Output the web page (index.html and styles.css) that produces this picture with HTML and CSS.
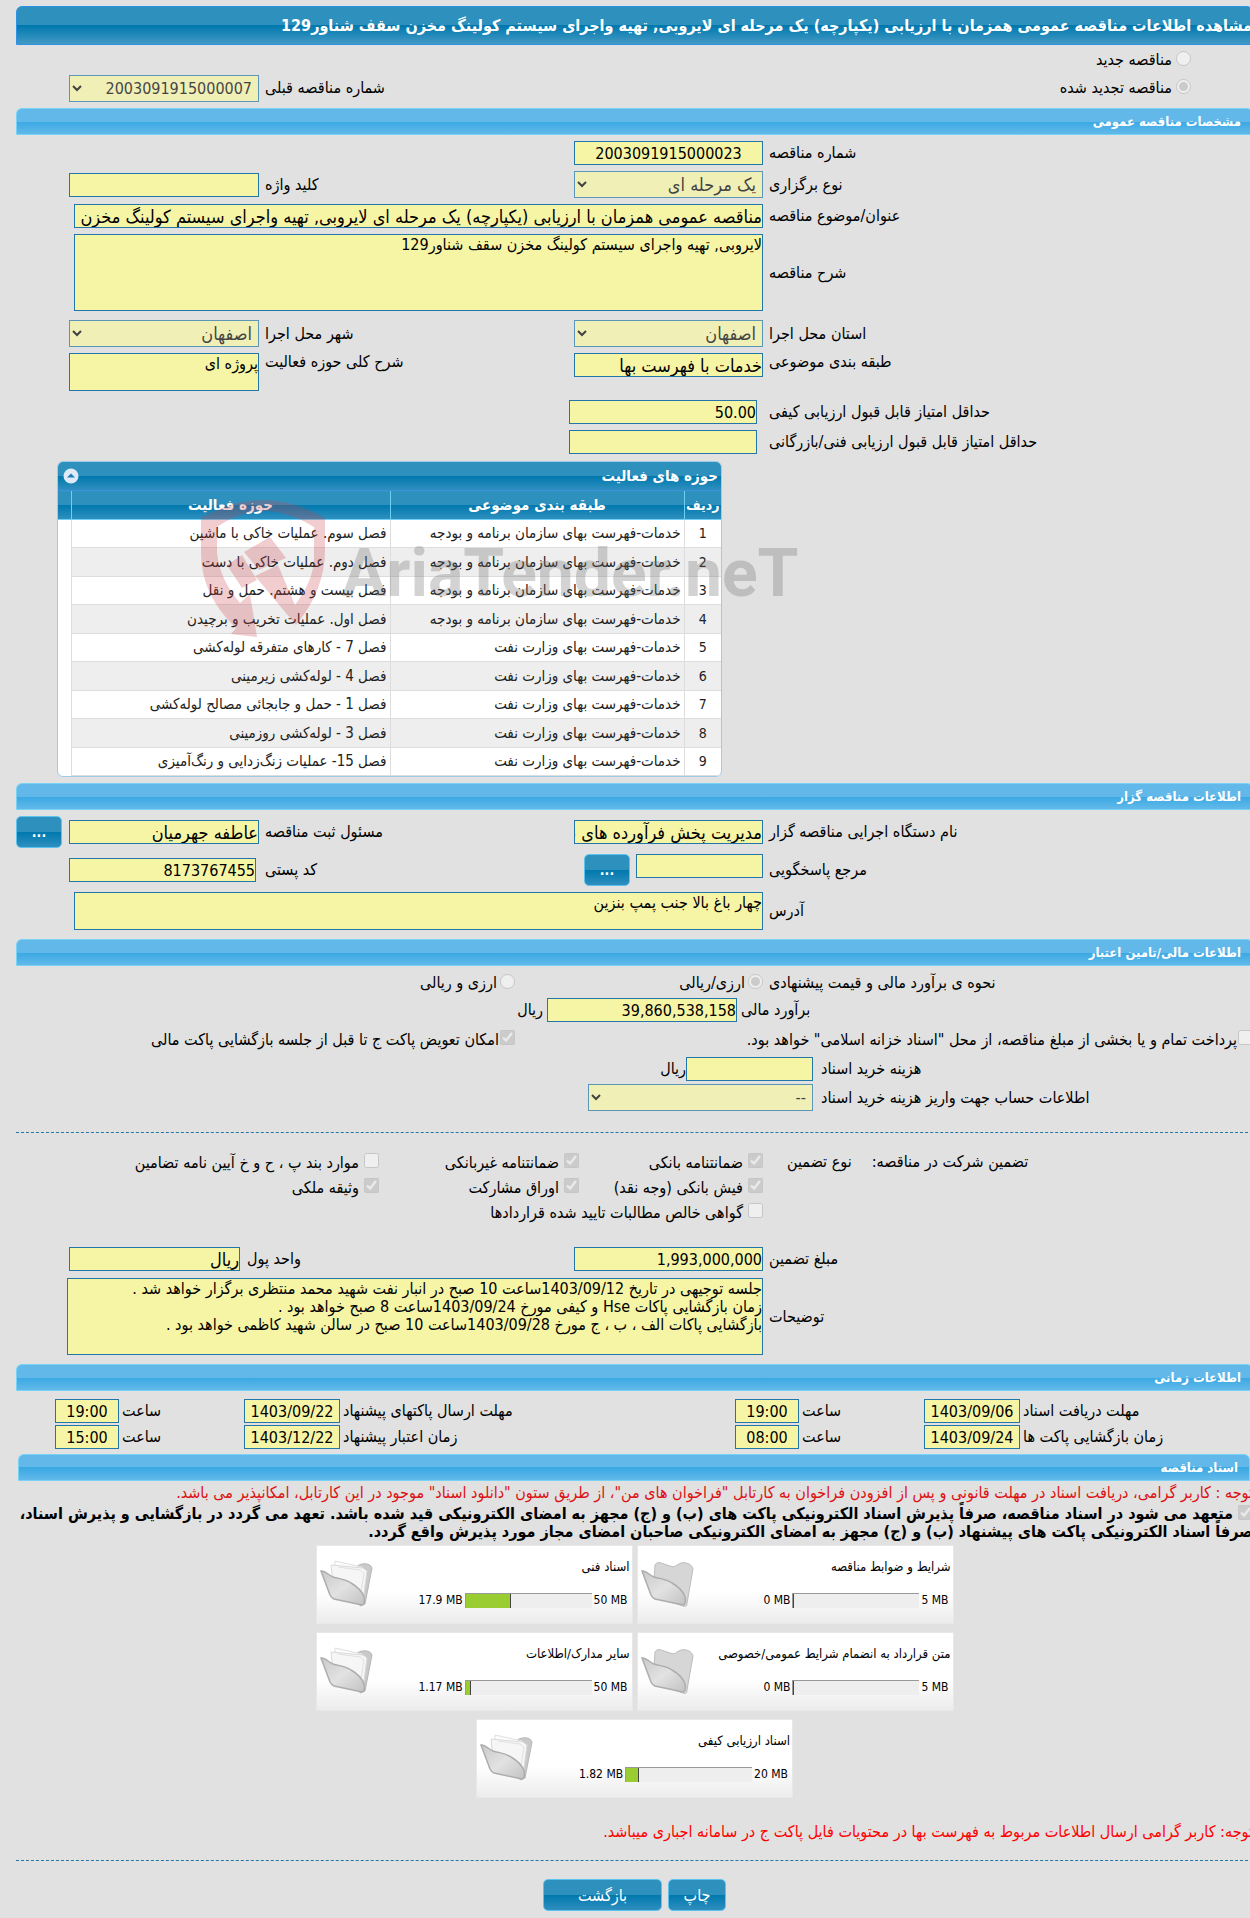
FILE: index.html
```html
<!DOCTYPE html>
<html lang="fa" dir="rtl">
<head>
  <meta charset="UTF-8">
  <meta name="viewport" content="width=device-width, initial-scale=1.0">
  <title>مشاهده اطلاعات مناقصه عمومی</title>
  <link rel="stylesheet" href="styles.css">
</head>
<body>

<!-- folder icons -->
<svg class="defs" width="0" height="0" aria-hidden="true">
  <defs>
    <linearGradient id="front" x1="0" y1="0" x2="1" y2="1">
      <stop offset="0" stop-color="#c9c9c9"/>
      <stop offset="0.5" stop-color="#e2e2e2"/>
      <stop offset="1" stop-color="#c2c2c2"/>
    </linearGradient>
    <symbol id="folder-empty" viewBox="0 0 54 50">
      <path d="M14 5c1-2 3-3 6-2l9 3c3 1 5 1 7-1l4-2c5-1 11 1 12 6l-6 34c0 3-1 4-4 3L12 36z" fill="#d6d6d6" stroke="#bdbdbd"/>
      <path d="M1 11c4-1 7 4 12 6 7 2 12 2 18 6 7 4 11 8 13 14 1 4 0 8-2 8L14 39c-2-1-3-2-4-4z" fill="url(#front)" stroke="#adadad" stroke-width="1.500"/>
    </symbol>
    <symbol id="folder-full" viewBox="0 0 54 50">
      <path d="M36 7c4-4 14-5 16 1l-7 36-5 2z" fill="#c9c9c9" stroke="#b8b8b8"/>
      <path d="M15 1l27 6-3 32-25-8z" fill="#fcfcfc" stroke="#e0e0e0"/>
      <path d="M11 5l32 3 4 3-4 30-29-8z" fill="#f6f6f6" stroke="#dadada"/>
      <path d="M18 7l22 3 4 3-4 25" fill="none" stroke="#e0e0e0"/>
      <path d="M1 11c4-1 7 4 12 6 7 2 12 2 18 6 7 4 11 8 13 14 1 4 0 8-2 8L14 39c-2-1-3-2-4-4z" fill="url(#front)" stroke="#adadad" stroke-width="1.500"/>
    </symbol>
  </defs>
</svg>

<main class="page">
  <h1 class="page-title">مشاهده اطلاعات مناقصه عمومی همزمان با ارزیابی (یکپارچه) یک مرحله ای لایروبی, تهیه واجرای سیستم کولینگ مخزن سقف شناور129</h1>

  <div class="kind">
    <label><input type="radio" name="kind" disabled>مناقصه جدید</label>
    <div class="kind-row">
      <label><input type="radio" name="kind" checked disabled>مناقصه تجدید شده</label>
      <label class="lbl" for="prev">شماره مناقصه قبلی</label>
      <select id="prev" disabled><option>2003091915000007</option></select>
    </div>
  </div>

  <!-- مشخصات -->
  <h2 class="bar">مشخصات مناقصه عمومی</h2>
  <div class="fields">
    <div class="row">
      <label class="lbl" for="no">شماره مناقصه</label>
      <input class="center" id="no" type="text" value="2003091915000023" readonly>
    </div>
    <div class="row">
      <label class="lbl" for="type">نوع برگزاری</label>
      <select class="fa" id="type" disabled><option>یک مرحله ای</option></select>
      <label class="lbl" for="key">کلید واژه</label>
      <input id="key" type="text" readonly>
    </div>
    <div class="row">
      <label class="lbl" for="subject">عنوان/موضوع مناقصه</label>
      <input class="wide fa" id="subject" type="text" value="مناقصه عمومی همزمان با ارزیابی (یکپارچه) یک مرحله ای لایروبی, تهیه واجرای سیستم کولینگ مخزن سقف شناور129" readonly>
    </div>
    <div class="row">
      <label class="lbl" for="desc">شرح مناقصه</label>
      <textarea class="wide tall" id="desc" readonly>لایروبی, تهیه واجرای سیستم کولینگ مخزن سقف شناور129</textarea>
    </div>
    <div class="row spaced">
      <label class="lbl" for="state">استان محل اجرا</label>
      <select class="fa" id="state" disabled><option>اصفهان</option></select>
      <label class="lbl" for="city">شهر محل اجرا</label>
      <select class="fa" id="city" disabled><option>اصفهان</option></select>
    </div>
    <div class="row top">
      <label class="lbl" for="class">طبقه بندی موضوعی</label>
      <input class="fa" id="class" type="text" value="خدمات با فهرست بها" readonly>
      <label class="lbl" for="scope">شرح کلی حوزه فعالیت</label>
      <textarea id="scope" readonly>پروژه ای</textarea>
    </div>
    <div class="row score spaced">
      <label class="lbl" for="q1">حداقل امتیاز قابل قبول ارزیابی کیفی</label>
      <input id="q1" type="text" value="50.00" readonly>
    </div>
    <div class="row score">
      <label class="lbl" for="q2">حداقل امتیاز قابل قبول ارزیابی فنی/بازرگانی</label>
      <input id="q2" type="text" readonly>
    </div>
  </div>

  <div class="panel">
    <div class="panel-title">
      <span>حوزه های فعالیت</span>
      <button class="collapse" aria-label="بستن"><svg viewBox="0 0 16 16" width="16" height="16"><circle cx="8" cy="8" r="7.500" fill="#dfe9f7"/><path d="M4 9.500L8 5.500l4 4z" fill="#1b7fb5"/></svg></button>
    </div>
    <table>
      <thead>
        <tr><th class="c-no">ردیف</th><th class="c-topic">طبقه بندی موضوعی</th><th>حوزه فعالیت</th><th class="c-end"></th></tr>
      </thead>
      <tbody>
        <tr><td>1</td><td>خدمات-فهرست بهای سازمان برنامه و بودجه</td><td>فصل سوم. عملیات خاکی با ماشین</td><td></td></tr>
        <tr><td>2</td><td>خدمات-فهرست بهای سازمان برنامه و بودجه</td><td>فصل دوم. عملیات خاکی با دست</td><td></td></tr>
        <tr><td>3</td><td>خدمات-فهرست بهای سازمان برنامه و بودجه</td><td>فصل بیست و هشتم. حمل و نقل</td><td></td></tr>
        <tr><td>4</td><td>خدمات-فهرست بهای سازمان برنامه و بودجه</td><td>فصل اول. عملیات تخریب و برچیدن</td><td></td></tr>
        <tr><td>5</td><td>خدمات-فهرست بهای وزارت نفت</td><td>فصل 7 - کارهای متفرقه لوله‌کشی</td><td></td></tr>
        <tr><td>6</td><td>خدمات-فهرست بهای وزارت نفت</td><td>فصل 4 - لوله‌کشی زیرمینی</td><td></td></tr>
        <tr><td>7</td><td>خدمات-فهرست بهای وزارت نفت</td><td>فصل 1 - حمل و جابجائی مصالح لوله‌کشی</td><td></td></tr>
        <tr><td>8</td><td>خدمات-فهرست بهای وزارت نفت</td><td>فصل 3 - لوله‌کشی روزمینی</td><td></td></tr>
        <tr><td>9</td><td>خدمات-فهرست بهای وزارت نفت</td><td>فصل 15- عملیات زنگ‌زدایی و رنگ‌آمیزی</td><td></td></tr>
      </tbody>
    </table>
    <div class="watermark">
      <svg viewBox="0 0 126 138" width="126" height="138">
        <path fill-rule="evenodd" d="M1 18Q62-18 125 18V50Q125 90 96 125L55 76L78 65L95 105Q114 80 114 57V27Q62-5 17 27V53Q20 80 40 103L50 94L57 137L31 134L36 128Q1 95 1 53Z"/>
        <path d="M27 65L42 55L57 80L42 88ZM44 52L70 37L86 58L59 70Z"/>
      </svg>
      <span>AriaTender.neT</span>
    </div>
  </div>

  <!-- مناقصه گزار -->
  <h2 class="bar">اطلاعات مناقصه گزار</h2>
  <div class="fields">
    <div class="row">
      <label class="lbl" for="org">نام دستگاه اجرایی مناقصه گزار</label>
      <input class="fa" id="org" type="text" value="مدیریت پخش فرآورده های نفتی" readonly>
      <label class="lbl" for="resp">مسئول ثبت مناقصه</label>
      <input class="fa" id="resp" type="text" value="عاطفه جهرمیان" readonly>
      <button class="btn dots end">...</button>
    </div>
    <div class="row">
      <label class="lbl" for="ref">مرجع پاسخگویی</label>
      <div class="pair">
        <input id="ref" type="text" readonly>
        <button class="btn dots">...</button>
      </div>
      <label class="lbl" for="zip">کد پستی</label>
      <input class="zip" id="zip" type="text" value="8173767455" readonly>
    </div>
    <div class="row">
      <label class="lbl" for="addr">آدرس</label>
      <textarea class="wide" id="addr" readonly>چهار باغ بالا جنب پمپ بنزین</textarea>
    </div>
  </div>

  <!-- مالی -->
  <h2 class="bar spaced-bar">اطلاعات مالی/تامین اعتبار</h2>
  <div class="money">
    <div class="row options">
      <span class="lbl">نحوه ی برآورد مالی و قیمت پیشنهادی</span>
      <div class="radios">
        <label><input type="radio" name="cur" checked disabled>ارزی/ریالی</label>
        <label><input type="radio" name="cur" disabled>ارزی و ریالی</label>
      </div>
    </div>
    <div class="estimate">
      <label class="lbl near" for="est">برآورد مالی</label>
      <input id="est" type="text" value="39,860,538,158" readonly>
      <span>ریال</span>
    </div>
    <div class="treasury">
      <label><input type="checkbox" disabled>پرداخت تمام و یا بخشی از مبلغ مناقصه، از محل "اسناد خزانه اسلامی" خواهد بود.</label>
      <label><input type="checkbox" checked disabled>امکان تعویض پاکت ج تا قبل از جلسه بازگشایی پاکت مالی</label>
    </div>
    <div class="fee">
      <label class="lbl" for="fee">هزینه خرید اسناد</label>
      <div class="fee-box"><input id="fee" type="text" readonly><span>ریال</span></div>
    </div>
    <div class="fee account">
      <label class="lbl" for="acc">اطلاعات حساب جهت واریز هزینه خرید اسناد</label>
      <select id="acc" disabled><option>--</option></select>
    </div>
  </div>

  <div class="guarantee">
    <div class="g-label"><span>تضمین شرکت در مناقصه:</span><span>نوع تضمین</span></div>
    <div class="checks">
      <label><input type="checkbox" checked disabled>ضمانتنامه بانکی</label>
      <label><input type="checkbox" checked disabled>ضمانتنامه غیربانکی</label>
      <label><input type="checkbox" disabled>موارد بند پ ، ح و خ آیین نامه تضامین</label>
      <label><input type="checkbox" checked disabled>فیش بانکی (وجه نقد)</label>
      <label><input type="checkbox" checked disabled>اوراق مشارکت</label>
      <label><input type="checkbox" checked disabled>وثیقه ملکی</label>
      <label class="span3"><input type="checkbox" disabled>گواهی خالص مطالبات تایید شده قراردادها</label>
    </div>
  </div>

  <div class="fields notes">
    <div class="row">
      <label class="lbl" for="amount">مبلغ تضمین</label>
      <input id="amount" type="text" value="1,993,000,000" readonly>
      <label class="lbl unit-lbl" for="unit">واحد پول</label>
      <input class="unit fa" id="unit" type="text" value="ریال" readonly>
    </div>
    <div class="row">
      <label class="lbl" for="note">توضیحات</label>
      <textarea class="wide tall full" id="note" readonly>جلسه توجیهی در تاریخ 1403/09/12ساعت 10 صبح در انبار نفت شهید محمد منتظری برگزار خواهد شد .
زمان بازگشایی پاکات Hse و کیفی مورخ 1403/09/24ساعت 8 صبح خواهد بود .
بازگشایی پاکات الف ، ب ، ج مورخ 1403/09/28ساعت 10 صبح در سالن شهید کاظمی خواهد بود .</textarea>
    </div>
  </div>

  <!-- زمانی -->
  <h2 class="bar spaced-bar">اطلاعات زمانی</h2>
  <div class="times">
    <label class="lbl near" for="d1">مهلت دریافت اسناد</label>
    <input class="center" id="d1" type="text" value="1403/09/06" readonly>
    <label class="lbl near" for="t1">ساعت</label>
    <input class="center" id="t1" type="text" value="19:00" readonly>
    <label class="lbl near" for="d2">مهلت ارسال پاکتهای پیشنهاد</label>
    <input class="center" id="d2" type="text" value="1403/09/22" readonly>
    <label class="lbl near" for="t2">ساعت</label>
    <input class="center" id="t2" type="text" value="19:00" readonly>
    <label class="lbl near" for="d3">زمان بازگشایی پاکت ها</label>
    <input class="center" id="d3" type="text" value="1403/09/24" readonly>
    <label class="lbl near" for="t3">ساعت</label>
    <input class="center" id="t3" type="text" value="08:00" readonly>
    <label class="lbl near" for="d4">زمان اعتبار پیشنهاد</label>
    <input class="center" id="d4" type="text" value="1403/12/22" readonly>
    <label class="lbl near" for="t4">ساعت</label>
    <input class="center" id="t4" type="text" value="15:00" readonly>
  </div>

  <!-- اسناد -->
  <h2 class="bar docs-bar">اسناد مناقصه</h2>
  <p class="warn">توجه : کاربر گرامی، دریافت اسناد در مهلت قانونی و پس از افزودن فراخوان به کارتابل "فراخوان های من"، از طریق ستون "دانلود اسناد" موجود در این کارتابل، امکانپذیر می باشد.</p>
  <label class="commit"><input type="checkbox" checked disabled> متعهد می شود در اسناد مناقصه، صرفاً پذیرش اسناد الکترونیکی پاکت های (ب) و (ج) مجهز به امضای الکترونیکی قید شده باشد. تعهد می گردد در بازگشایی و پذیرش اسناد،<br>صرفاً اسناد الکترونیکی پاکت های پیشنهاد (ب) و (ج) مجهز به امضای الکترونیکی صاحبان امضای مجاز مورد پذیرش واقع گردد.</label>

  <div class="cards">
    <div class="card">
      <div class="card-body">
        <p>شرایط و ضوابط مناقصه</p>
        <div class="usage"><span>5 MB</span><div class="meter"><div class="fill" style="width: 0%"></div></div><span>0 MB</span></div>
      </div>
      <svg class="folder"><use href="#folder-empty"/></svg>
    </div>
    <div class="card">
      <div class="card-body">
        <p>اسناد فنی</p>
        <div class="usage"><span>50 MB</span><div class="meter"><div class="fill" style="width: 36%"></div></div><span>17.9 MB</span></div>
      </div>
      <svg class="folder"><use href="#folder-full"/></svg>
    </div>
    <div class="card">
      <div class="card-body">
        <p>متن قرارداد به انضمام شرایط عمومی/خصوصی</p>
        <div class="usage"><span>5 MB</span><div class="meter"><div class="fill" style="width: 0%"></div></div><span>0 MB</span></div>
      </div>
      <svg class="folder"><use href="#folder-empty"/></svg>
    </div>
    <div class="card">
      <div class="card-body">
        <p>سایر مدارک/اطلاعات</p>
        <div class="usage"><span>50 MB</span><div class="meter"><div class="fill" style="width: 4%"></div></div><span>1.17 MB</span></div>
      </div>
      <svg class="folder"><use href="#folder-full"/></svg>
    </div>
    <div class="card">
      <div class="card-body">
        <p>اسناد ارزیابی کیفی</p>
        <div class="usage"><span>20 MB</span><div class="meter"><div class="fill" style="width: 10%"></div></div><span>1.82 MB</span></div>
      </div>
      <svg class="folder"><use href="#folder-full"/></svg>
    </div>
  </div>

  <p class="warn red">توجه: کاربر گرامی ارسال اطلاعات مربوط به فهرست بها در محتویات فایل پاکت ج در سامانه اجباری میباشد.</p>

  <div class="actions">
    <button class="btn">چاپ</button>
    <button class="btn back">بازگشت</button>
  </div>
</main>

</body>
</html>
```
FILE: styles.css
```css
* {
  box-sizing: border-box;
}
html {
  overflow-x: hidden;
  background: #e1e1e1;
}
body {
  margin: 0;
  overflow-x: hidden;
  background: #e1e1e1;
  font-family: "DejaVu Sans Condensed", Tahoma, sans-serif;
  font-size: 16px;
  line-height: 18px;
  color: #000;
}
.defs {
  position: absolute;
}
/* the form is slightly wider than the frame it sits in */
.page {
  margin-right: -3px;
  padding: 6px 0 7px 16px;
}
.page-title {
  margin: 0;
  height: 39px;
  line-height: 37px;
  font-size: 16px;
  white-space: nowrap;
  color: #fff;
  border: 1px solid #2d92e6;
  border-radius: 6px 6px 0 0;
  background: linear-gradient(#2e90bd 50%, #0078ae 50%, #4399c4);
}
.bar {
  margin: 0;
  height: 27px;
  line-height: 25px;
  padding: 0 11px;
  font-size: 13px;
  color: #fff;
  border: 1px solid #78d2f5;
  border-radius: 6px 6px 0 0;
  background: linear-gradient(#62b9e9 50%, #39a8e3 50%, #62b9e9);
}
.spaced-bar {
  margin-top: 9px;
}
.docs-bar {
  margin: 5px 3px 0 2px;
}

/* controls */
input, select, textarea, button {
  font-family: inherit;
  margin: 0;
}
input[type="text"], select, textarea {
  width: 100%;
  border: 1px solid #2277a8;
  background: #f6f5a5;
  font-size: 16px;
  color: #000;
  border-radius: 0;
}
input[type="text"] {
  height: 24px;
  padding: 0;
}
select {
  height: 27px;
  padding: 0 2px 0 6px;
}
input.fa, select.fa {
  font-size: 18px;
}
textarea {
  display: block;
  height: 38px;
  padding: 1px 0;
  line-height: 18px;
  resize: none;
  overflow: hidden;
}
input[type="radio"], input[type="checkbox"] {
  width: 15px;
  height: 15px;
  flex: none;
  margin-bottom: 4px;
}
.center {
  text-align: center;
}
.lbl {
  text-align: left;
  padding-left: 6px;
  white-space: nowrap;
}
.near {
  padding-left: 3px;
}
.btn {
  height: 32px;
  width: 58px;
  padding: 0;
  font-size: 16px;
  color: #fff;
  border: 1px solid #5cc3ee;
  border-radius: 5px;
  background: linear-gradient(#2e90bd 50%, #0078ae 50%, #2f8fbe);
}
.dots {
  width: 46px;
  font-weight: bold;
  font-size: 14px;
}
.back {
  width: 119px;
}

/* first rows */
.kind {
  padding: 1px 62px 6px 53px;
}
.kind label {
  display: flex;
  align-items: center;
  gap: 4px;
  height: 28px;
}
.kind-row {
  display: grid;
  grid-template-columns: 1fr auto 190px;
  align-items: center;
}

.fields {
  display: grid;
  gap: 6px;
  padding: 6px 0 0;
}
.row {
  display: grid;
  grid-template-columns: 1fr 189px 315px 190px 53px;
  align-items: center;
}
.top {
  align-items: start;
}
.spaced {
  margin-top: 3px;
}
.score {
  grid-template-columns: 1fr 188px 553px;
}
.score .lbl {
  padding-left: 12px;
}
.wide {
  grid-column: 2 / 5;
  width: auto;
  margin-left: 5px;
}
input.wide {
  width: calc(100% - 5px);
}
textarea.wide {
  width: auto;
}
.full {
  margin-left: -2px;
}
.tall {
  height: 77px;
}
.end {
  justify-self: end;
}
.pair {
  display: flex;
  gap: 6px;
}
.pair input[type="text"] {
  width: 127px;
}
.pair .btn {
  flex: none;
}
input.zip {
  justify-self: end;
  width: 187px;
}

/* activity table */
.panel {
  position: relative;
  width: 665px;
  margin: 7px auto 6px 41px;
  border: 1px solid #9fcbe6;
  border-radius: 6px;
  background: #fff;
}
.panel-title {
  display: flex;
  justify-content: space-between;
  align-items: center;
  height: 29px;
  padding: 0 3px 0 5px;
  font-size: 15px;
  font-weight: bold;
  color: #fff;
  border-bottom: 1px solid #3d94dc;
  border-radius: 5px 5px 0 0;
  background: linear-gradient(#2e90bd 50%, #0078ae 50%, #2f8fbe);
}
.collapse {
  padding: 0;
  border: 0;
  background: none;
  line-height: 0;
}
table {
  width: 100%;
  height: 285px;
  table-layout: fixed;
  border-collapse: collapse;
}
th {
  height: 28px;
  padding: 0;
  font-size: 15px;
  color: #fff;
  border-left: 1px solid #6cd0f5;
  border-bottom: 1px solid #6cd0f5;
  background: linear-gradient(#2e90bd 50%, #0078ae 50%, #2f8fbe);
}
td {
  padding: 0 3px;
  font-size: 15px;
  color: #222;
  border-left: 1px solid #ddd;
  border-bottom: 1px solid #ddd;
}
td:first-child {
  text-align: center;
  font-size: 14px;
}
th.c-no {
  font-size: 14px;
}
td:last-child {
  border-bottom: 0;
}
th:last-child, td:last-child {
  border-left: 0;
}
tr:nth-child(even) td {
  background: #eee;
}
tr:nth-child(even) td:last-child {
  background: #fff;
}
.c-no {
  width: 37px;
}
.c-topic {
  width: 294px;
}
.c-end {
  width: 13px;
}
.watermark {
  position: absolute;
  top: 38px;
  left: 142px;
  display: flex;
  direction: ltr;
  align-items: flex-start;
  gap: 16px;
  pointer-events: none;
}
.watermark svg {
  flex: none;
  fill: rgba(205, 60, 70, 0.26);
}
.watermark span {
  padding-top: 32px;
  font-family: Roboto, "Liberation Sans", sans-serif;
  font-size: 66px;
  line-height: 84px;
  font-weight: bold;
  color: rgba(110, 110, 110, 0.3);
}

/* money */
.money {
  padding: 2px 0 21px;
  border-bottom: 1px dashed #2277a8;
}
.radios {
  grid-column: 2 / 5;
  display: grid;
  grid-template-columns: 248px 1fr;
}
.options {
  height: 30px;
}
.radios label, .treasury label, .checks label {
  display: flex;
  align-items: center;
  gap: 3px;
}
.estimate {
  display: grid;
  grid-template-columns: 1fr 190px 531px;
  align-items: center;
}
.estimate .lbl {
  padding-left: 4px;
}
.estimate span {
  padding-right: 4px;
}
.treasury {
  display: flex;
  justify-content: space-between;
  height: 35px;
}
.treasury label {
  gap: 1px;
  white-space: nowrap;
}
.treasury label:last-child {
  width: 499px;
}
.fee {
  display: grid;
  grid-template-columns: 1fr 225px 572px;
  align-items: center;
}
.fee .lbl {
  padding-left: 8px;
}
.account {
  margin-top: 3px;
}
.fee-box {
  display: flex;
  align-items: center;
}
.fee-box input[type="text"] {
  width: 127px;
}

.guarantee {
  display: grid;
  grid-template-columns: 1fr 747px;
  padding-top: 17px;
}
.g-label {
  display: flex;
  justify-content: flex-end;
  gap: 20px;
  padding: 3px 0 0 24px;
}
.checks {
  display: grid;
  grid-template-columns: 184px 200px 1fr;
  grid-auto-rows: 25px;
}
.checks label {
  gap: 5px;
}
.span3 {
  grid-column: 1 / 4;
}
.notes {
  gap: 7px;
  padding-top: 22px;
}
input.unit {
  justify-self: end;
  width: 171px;
}
.unit-lbl {
  margin-left: -18px;
}

.times {
  display: grid;
  grid-template-columns: 1fr 96px 125px 64px 395px 96px 125px 64px;
  row-gap: 2px;
  align-items: center;
  padding: 8px 0 0 39px;
}

/* documents */
.warn {
  margin: 0;
  line-height: 24px;
  white-space: nowrap;
  color: #d11;
}
.red {
  color: #f00;
  padding-top: 22px;
}
.commit {
  display: block;
  height: 36px;
  font-weight: bold;
  white-space: nowrap;
}
.commit input[type="checkbox"] {
  margin: 0;
  vertical-align: -1px;
}
.cards {
  display: flex;
  flex-wrap: wrap;
  justify-content: center;
  gap: 8px 4px;
  width: 638px;
  margin: 4px auto 0;
}
.card {
  display: flex;
  justify-content: space-between;
  width: 317px;
  height: 79px;
  padding: 12px 2px 0 3px;
  border: 1px solid #e8e8e8;
  background: linear-gradient(#fff 60%, #ececec);
}
.card p {
  margin: 0 0 16px;
  font-size: 13px;
}
.usage {
  display: flex;
  align-items: center;
  gap: 2px;
  height: 16px;
  padding-right: 2px;
  font-size: 12px;
}
.usage span {
  direction: ltr;
}
.meter {
  display: flex;
  direction: ltr;
  width: 127px;
  height: 15px;
  border-top: 1px solid #999;
  border-left: 1px solid #999;
  background: #eee;
}
.fill {
  background: #9acd32;
  border-right: 1px solid #444;
}
.folder {
  flex: none;
  width: 54px;
  height: 50px;
  margin-top: 2px;
}

.actions {
  display: flex;
  justify-content: center;
  gap: 6px;
  margin-top: 16px;
  padding: 18px 0 0;
  border-top: 1px dashed #2277a8;
}
```
